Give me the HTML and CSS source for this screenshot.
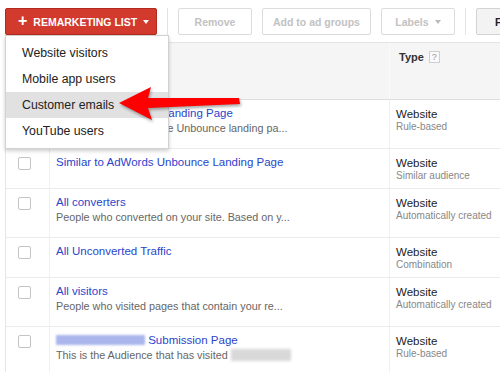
FILE: index.html
```html
<!DOCTYPE html>
<html>
<head>
<meta charset="utf-8">
<link rel="stylesheet" href="styles.css">
</head>
<body>
<div class="page">
  <div class="toolbar">
    <button class="btn-red"><span class="plus">+</span>REMARKETING LIST<span class="caret"></span></button>
    <span class="sep"></span>
    <button class="btn btn-remove">Remove</button>
    <button class="btn btn-add">Add to ad groups</button>
    <button class="btn btn-labels">Labels<span class="caret grey"></span></button>
    <span class="sep"></span>
    <button class="btn btn-filter">Fi</button>
  </div>

  <div class="table">
    <div class="row head">
      <div class="cell chk"></div>
      <div class="cell name"></div>
      <div class="cell type"><span class="th">Type</span><span class="help">?</span></div>
    </div>
    <div class="row double">
      <div class="cell chk"><span class="box"></span></div>
      <div class="cell name"><a class="link">AdWords Unbounce Landing Page</a><div class="desc">Visitors who came to the Unbounce landing pa...</div></div>
      <div class="cell type"><div class="t1">Website</div><div class="t2">Rule-based</div></div>
    </div>
    <div class="row single">
      <div class="cell chk"><span class="box"></span></div>
      <div class="cell name"><a class="link">Similar to AdWords Unbounce Landing Page</a></div>
      <div class="cell type"><div class="t1">Website</div><div class="t2">Similar audience</div></div>
    </div>
    <div class="row double">
      <div class="cell chk"><span class="box"></span></div>
      <div class="cell name"><a class="link">All converters</a><div class="desc">People who converted on your site. Based on y...</div></div>
      <div class="cell type"><div class="t1">Website</div><div class="t2">Automatically created</div></div>
    </div>
    <div class="row single">
      <div class="cell chk"><span class="box"></span></div>
      <div class="cell name"><a class="link">All Unconverted Traffic</a></div>
      <div class="cell type"><div class="t1">Website</div><div class="t2">Combination</div></div>
    </div>
    <div class="row double">
      <div class="cell chk"><span class="box"></span></div>
      <div class="cell name"><a class="link">All visitors</a><div class="desc">People who visited pages that contain your re...</div></div>
      <div class="cell type"><div class="t1">Website</div><div class="t2">Automatically created</div></div>
    </div>
    <div class="row double">
      <div class="cell chk"><span class="box"></span></div>
      <div class="cell name"><a class="link"><span class="blur-blue"></span> Submission Page</a><div class="desc">This is the Audience that has visited <span class="blur-grey"></span></div></div>
      <div class="cell type"><div class="t1">Website</div><div class="t2">Rule-based</div></div>
    </div>
  </div>

  <div class="menu">
    <div class="item">Website visitors</div>
    <div class="item">Mobile app users</div>
    <div class="item active">Customer emails</div>
    <div class="item">YouTube users</div>
  </div>

  <svg class="arrow" width="140" height="50" viewBox="0 0 140 50">
    <polygon points="2,26 34,10 31,21 122,21 123,27 31,31 35,43" fill="#ff0000"/>
  </svg>
</div>
</body>
</html>
```

FILE: styles.css
```css
* { box-sizing: border-box; }
html, body { margin: 0; padding: 0; background: #fff; }
body { font-family: "Liberation Sans", Arial, sans-serif; width: 500px; height: 372px; overflow: hidden; }
.page { position: relative; width: 500px; height: 372px; overflow: hidden; }

.toolbar {
  display: flex;
  align-items: center;
  gap: 10px;
  padding: 8px 0 0 5px;
  height: 35px;
  white-space: nowrap;
}
.btn-red {
  flex: none;
  display: flex;
  align-items: center;
  height: 27px;
  width: 152px;
  padding: 0 0 0 12px;
  background: #d23a2d;
  border: 1px solid #b22a1f;
  border-radius: 2px;
  color: #fff;
  font: bold 10.5px "Liberation Sans", Arial, sans-serif;
}
.plus { font-size: 16px; font-weight: bold; margin-right: 6px; line-height: 10px; position: relative; top: -1px; }
.caret {
  display: inline-block;
  width: 0; height: 0;
  border-left: 3.5px solid transparent;
  border-right: 3.5px solid transparent;
  border-top: 4px solid #fff;
  margin-left: 6px;
}
.caret.grey { border-top-color: #bbb; }
.sep { flex: none; width: 1px; height: 27px; background: #e3e3e3; }
.btn {
  flex: none;
  height: 27px;
  background: #fff;
  border: 1px solid #dcdcdc;
  border-radius: 2px;
  color: #c2c2c2;
  font: bold 10.5px "Liberation Sans", Arial, sans-serif;
  padding: 0;
  display: flex;
  align-items: center;
  justify-content: center;
}
.btn-remove { width: 74px; }
.btn-add { width: 109px; }
.btn-labels { width: 74px; }
.btn-filter {
  width: 40px;
  justify-content: flex-start;
  padding-left: 18px;
  background: #f3f3f3;
  border-color: #d3d3d3;
  color: #222;
}

.table {
  margin: 7px 0 0 5px;
  width: 560px;
  border-left: 1px solid #e6e6e6;
}
.row {
  display: grid;
  grid-template-columns: 43px 340px 1fr;
  border-bottom: 1px solid #ebebeb;
}
.row.head {
  height: 58px;
  background: #f5f5f5;
  border-top: 1px solid #e4e4e4;
  border-bottom: 1px solid #dedede;
}
.row.single { height: 40px; }
.row.double { height: 49px; }
.cell { border-left: 1px solid #f0f0f0; }
.cell.chk { border-left: none; padding: 8px 0 0 12px; }
.row.head .cell { border-left-color: #fafafa; }
.cell.name { padding: 6px 0 0 6px; white-space: nowrap; overflow: hidden; }
.cell.type { padding: 7px 0 0 6px; white-space: nowrap; }
.row.head .cell.type { padding: 8px 0 0 9px; display: flex; align-items: flex-start; }
.th { font-size: 11px; font-weight: bold; color: #333; line-height: 13px; }
.help {
  display: inline-flex;
  align-items: center;
  justify-content: center;
  width: 11px; height: 12px;
  margin-left: 5px;
  border: 1px solid #cfcfcf;
  background: #fafafa;
  color: #999;
  font-size: 9px;
  line-height: 10px;
}
.box {
  display: block;
  width: 13px; height: 13px;
  border: 1px solid #c4c4c4;
  border-radius: 2px;
  background: #fff;
}
.link {
  display: block;
  font-size: 11.5px;
  line-height: 15px;
  color: #2a44cc;
  text-decoration: none;
}
.desc {
  font-size: 10.8px;
  line-height: 15px;
  color: #666;
}
.t1 { font-size: 11.5px; line-height: 14px; color: #222; }
.t2 { font-size: 10px; line-height: 12px; color: #888; }

.blur-blue {
  display: inline-block;
  width: 89px; height: 10px;
  vertical-align: -1px;
  background: #aab5ec;
  filter: blur(1px);
}
.blur-grey {
  display: inline-block;
  width: 60px; height: 12px;
  vertical-align: -2px;
  background: #d8d8d8;
  filter: blur(1.5px);
}

.menu {
  position: absolute;
  left: 5px;
  top: 35px;
  width: 164px;
  padding: 4px 0;
  background: #fff;
  border: 1px solid rgba(0,0,0,0.18);
  box-shadow: 0 2px 4px rgba(0,0,0,0.2);
}
.item {
  height: 26px;
  line-height: 26px;
  padding-left: 16px;
  font-size: 12.3px;
  color: #222;
}
.item.active { background: #e1e1e1; }

.arrow {
  position: absolute;
  left: 117px;
  top: 77px;
  filter: drop-shadow(1px 2px 1.5px rgba(0,0,0,0.35));
}
```
